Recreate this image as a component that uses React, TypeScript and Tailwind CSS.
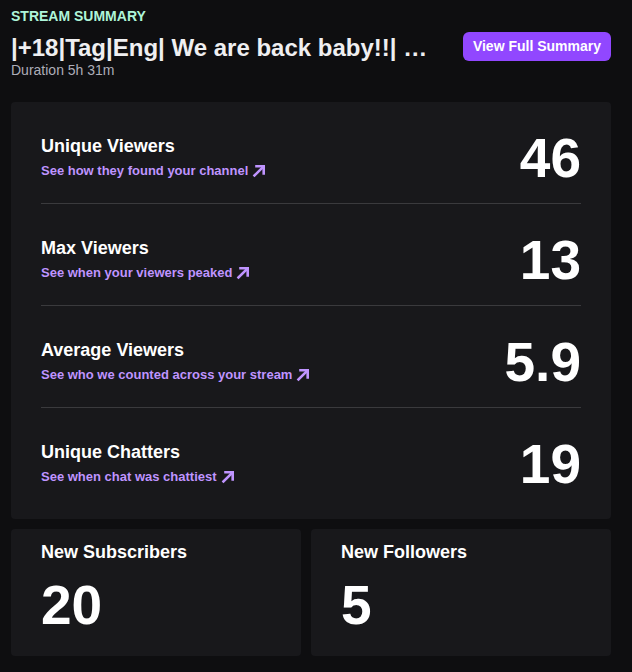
const stats = [
  { label: 'Unique Viewers', link: 'See how they found your channel', value: '46' },
  { label: 'Max Viewers', link: 'See when your viewers peaked', value: '13' },
  { label: 'Average Viewers', link: 'See who we counted across your stream', value: '5.9' },
  { label: 'Unique Chatters', link: 'See when chat was chattiest', value: '19' },
]

const totals = [
  { label: 'New Subscribers', value: '20' },
  { label: 'New Followers', value: '5' },
]

function LinkArrow() {
  return (
    <svg width="14" height="14" viewBox="0 0 14 14" fill="none" className="shrink-0">
      <path d="M2.5 11.5 L11 3" stroke="#bf94ff" strokeWidth="2.6" strokeLinecap="square" />
      <path d="M4.5 2.3 H11.7 V9.5" stroke="#bf94ff" strokeWidth="2.6" strokeLinecap="square" />
    </svg>
  )
}

function StatRow({ label, link, value, last }: { label: string; link: string; value: string; last: boolean }) {
  return (
    <div
      className={
        'flex items-center justify-between pt-[30px] pb-[19px] ' + (last ? '' : 'border-b border-[#3a3a3d]')
      }
    >
      <div>
        <div className="text-[18px] leading-[20px] font-bold text-white">{label}</div>
        <a href="#" className="mt-[6px] flex items-center gap-[4px] text-[13px] leading-[18px] font-bold text-[#bf94ff]">
          {link}
          <LinkArrow />
        </a>
      </div>
      <div className="text-[55px] leading-[52px] font-bold text-white">{value}</div>
    </div>
  )
}

export default function App() {
  return (
    <div className="min-h-[672px] bg-[#0e0e10] pl-[11px] pr-[21px] pt-[8px] pb-4 font-['Liberation_Sans',Arial,sans-serif]">
      <div className="text-[14px] leading-[16px] font-bold uppercase text-[#aef5d9]">Stream Summary</div>
      <div className="mt-[10px] flex items-center justify-between">
        <h1 className="text-[24px] leading-[28px] font-bold whitespace-nowrap text-[#efeff1]">
          |+18|Tag|Eng| We are back baby!!| …
        </h1>
        <button className="-mt-[3px] h-[29px] rounded-[6px] bg-[#9147ff] px-[10px] text-[14px] font-bold text-white">
          View Full Summary
        </button>
      </div>
      <div className="text-[14px] leading-[16px] text-[#adadb8]">Duration 5h 31m</div>

      <div className="mt-[24px] rounded-[4px] bg-[#18181b] px-[30px] pb-[10px]">
        {stats.map((s, i) => (
          <StatRow key={s.label} {...s} last={i === stats.length - 1} />
        ))}
      </div>

      <div className="mt-[10px] grid grid-cols-[290px_1fr] gap-[10px]">
        {totals.map((t) => (
          <div key={t.label} className="rounded-[4px] bg-[#18181b] px-[30px] pt-[13px] pb-[25px]">
            <div className="text-[18px] leading-[20px] font-bold text-white">{t.label}</div>
            <div className="mt-[17px] text-[55px] leading-[52px] font-bold text-white">{t.value}</div>
          </div>
        ))}
      </div>
    </div>
  )
}
